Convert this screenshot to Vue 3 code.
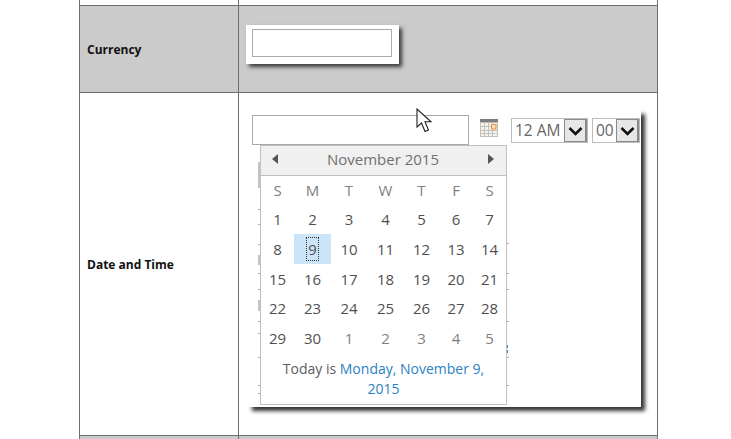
<template>
  <div class="page">
    <div class="table">
      <div class="row strip">
        <div class="label"></div>
        <div class="value"></div>
      </div>

      <div class="row grey currency">
        <div class="label">Currency</div>
        <div class="value">
          <div class="box">
            <div class="input"></div>
          </div>
        </div>
      </div>

      <div class="row datetime">
        <div class="label">Date and Time</div>
        <div class="value">
          <div class="panel">
            <div class="controls">
              <div class="input date"></div>
              <svg class="cal-icon" width="18" height="18" viewBox="0 0 18 18">
                <rect x="0" y="0" width="18" height="18" fill="#f6f2ec" />
                <rect x="0" y="0" width="18" height="3.500" fill="#7d7d80" />
                <path
                  d="M0.5 3V18M4.5 3V18M8.5 3V18M12.5 3V18M17.5 3V18M0 7.5H18M0 11.5H18M0 14.5H18M0 17.5H18"
                  stroke="#c4c0ba"
                  stroke-width="1"
                  fill="none"
                />
                <rect x="11.500" y="5.500" width="4.500" height="4.500" fill="#fbdcb6" stroke="#e8934a" />
              </svg>
              <div class="select hour">
                <span>12 AM</span>
                <i class="arrow">
                  <svg width="15" height="10" viewBox="0 0 15 10">
                    <path d="M1.5 2L7.500 8L13.500 2" stroke="#111" stroke-width="2.600" fill="none" />
                  </svg>
                </i>
              </div>
              <div class="select minute">
                <span>00</span>
                <i class="arrow">
                  <svg width="15" height="10" viewBox="0 0 15 10">
                    <path d="M1.5 2L7.500 8L13.500 2" stroke="#111" stroke-width="2.600" fill="none" />
                  </svg>
                </i>
              </div>
            </div>

            <!-- bits of the form underneath that stick out past the popup -->
            <i
              v-for="(m, i) in marks"
              :key="i"
              class="mark"
              :class="m.c"
              :style="{ left: m.x + 'px', top: m.y + 'px', width: m.w + 'px', height: m.h + 'px' }"
            ></i>

            <div class="calendar">
              <div class="cal-head">
                <span class="tri left"></span>
                <span class="month">November 2015</span>
                <span class="tri right"></span>
              </div>
              <div class="cal-grid">
                <div v-for="(d, i) in weekdays" :key="'w' + i" class="cell weekday">{{ d }}</div>
                <div
                  v-for="day in days"
                  :key="day.key"
                  class="cell"
                  :class="{ other: day.other, today: day.today }"
                >
                  <span>{{ day.n }}</span>
                </div>
              </div>
              <div class="cal-foot">Today is <a>Monday, November 9, 2015</a></div>
            </div>
          </div>
        </div>
      </div>

      <div class="row grey last">
        <div class="label"></div>
        <div class="value"></div>
      </div>
    </div>

    <svg class="cursor" width="17" height="26" viewBox="0 0 17 26">
      <path
        d="M1 1V19L5.500 15L9 23.500L12.500 22L9 13.800H15Z"
        fill="#fff"
        stroke="#222"
        stroke-width="1.100"
      />
    </svg>
  </div>
</template>

<script setup>
const weekdays = ["S", "M", "T", "W", "T", "F", "S"];

const days = [];
for (let n = 1; n <= 30; n++) {
  days.push({ key: "d" + n, n, other: false, today: n === 9 });
}
for (let n = 1; n <= 5; n++) {
  days.push({ key: "o" + n, n, other: true, today: false });
}

// y values are relative to the panel, which starts at y=108
const leftTicks = [101, 116, 136, 165, 181, 213, 225, 249, 277, 285];
const rightTicks = [135, 165, 181, 213, 249, 277];

const marks = [
  { x: 12, y: 54, w: 2, h: 26, c: "bar" },
  { x: 12, y: 147, w: 2, h: 10, c: "bar" },
  { x: 12, y: 192, w: 2, h: 11, c: "bar" },
  ...leftTicks.map((y) => ({ x: 12, y, w: 2, h: 1, c: "tick" })),
  ...rightTicks.map((y) => ({ x: 261, y, w: 2, h: 1, c: "tick" })),
  { x: 261, y: 237, w: 1, h: 3, c: "blue" },
  { x: 261, y: 242, w: 1, h: 3, c: "blue" },
];
</script>

<style>
html,
body {
  margin: 0;
  background: #fff;
  overflow: hidden;
}
</style>

<style scoped>
.page {
  position: relative;
  width: 731px;
  height: 439px;
  overflow: hidden;
  background: #fff;
  font-family: "Open Sans", "Liberation Sans", sans-serif;
  color: #555;
}

.table {
  width: 577px;
  margin-left: 79px;
  border-left: 1px solid #6e6e6e;
  border-right: 1px solid #6e6e6e;
}

.row {
  display: grid;
  grid-template-columns: 159px 1fr;
  border-bottom: 1px solid #6e6e6e;
}

.grey {
  background: #cbcbcb;
}

.strip {
  height: 5px;
}

.currency {
  height: 86px;
}

.datetime {
  height: 342px;
}

.last {
  height: 10px;
  border-bottom: none;
}

.label {
  display: flex;
  align-items: center;
  padding-left: 7px;
  font-size: 12px;
  font-weight: 700;
  color: #111;
  border-right: 1px solid #6e6e6e;
}

.value {
  padding-left: 7px;
  min-width: 0;
}

.box {
  width: 153px;
  height: 39px;
  margin-top: 19px;
  padding: 4px 0 0 6px;
  box-sizing: border-box;
  background: #fff;
  box-shadow: 3px 3px 4px #3c3c3c;
}

.input {
  width: 140px;
  height: 28px;
  box-sizing: border-box;
  border: 1px solid #a9a9a9;
  background: #fff;
}

.panel {
  position: relative;
  width: 395px;
  height: 299px;
  margin-top: 15px;
  background: #fff;
  box-shadow: 5px 5px 4px -1px #333;
}

.controls {
  display: flex;
  align-items: flex-start;
  padding: 7px 0 0 6px;
}

.input.date {
  width: 217px;
  height: 30px;
}

.cal-icon {
  margin: 4px 0 0 11px;
}

.select {
  display: flex;
  height: 25px;
  margin-top: 3px;
  box-sizing: border-box;
  border: 1px solid #bdbdbd;
  font-size: 15.5px;
  line-height: 23px;
  color: #666;
}

.select span {
  flex: 1;
  padding-left: 3px;
}

.hour {
  width: 77px;
  margin-left: 13px;
}

.minute {
  width: 48px;
  margin-left: 4px;
}

.arrow {
  display: flex;
  align-items: center;
  justify-content: center;
  width: 23px;
  box-sizing: border-box;
  background: #e6e6e6;
  border: 1px solid #8a8a8a;
  border-width: 1px 2px 1px 1px;
}

.mark {
  position: absolute;
}

.bar {
  background: #c4c4c4;
}

.tick {
  background: #a8a8a8;
}

.blue {
  background: #3f86c4;
}

.calendar {
  position: absolute;
  left: 14px;
  top: 37px;
  width: 247px;
  height: 260px;
  box-sizing: border-box;
  background: #fff;
  border: 1px solid #c0c0c0;
}

.cal-head {
  display: flex;
  align-items: center;
  justify-content: space-between;
  height: 30px;
  padding: 0 12px 3px 11px;
  box-sizing: border-box;
  background: #f0f0f0;
  border-bottom: 1px solid #c0c0c0;
}

.month {
  font-size: 15px;
  color: #707070;
}

.tri {
  width: 0;
  height: 0;
  border-top: 5px solid transparent;
  border-bottom: 5px solid transparent;
}

.tri.left {
  border-right: 6px solid #555;
}

.tri.right {
  border-left: 6px solid #555;
}

.cal-grid {
  display: grid;
  grid-template-columns: 33px 37px 36px 37px 35px 34px 33px;
  grid-auto-rows: 29.6px;
  margin-top: -1px;
}

.cell {
  display: flex;
  align-items: center;
  justify-content: center;
  font-size: 15px;
  color: #505050;
}

.weekday {
  color: #808080;
}

.other {
  color: #808080;
}

.today {
  background: #cce4f7;
}

.today span {
  outline: 1px dotted #333;
  line-height: 22px;
  padding: 0 1px;
}

.cal-foot {
  padding: 6px 16px 0;
  font-size: 14px;
  line-height: 20px;
  text-align: center;
  color: #5c5c5c;
}

.cal-foot a {
  color: #2b7fc4;
}

.cursor {
  position: absolute;
  left: 416px;
  top: 108px;
}
</style>
